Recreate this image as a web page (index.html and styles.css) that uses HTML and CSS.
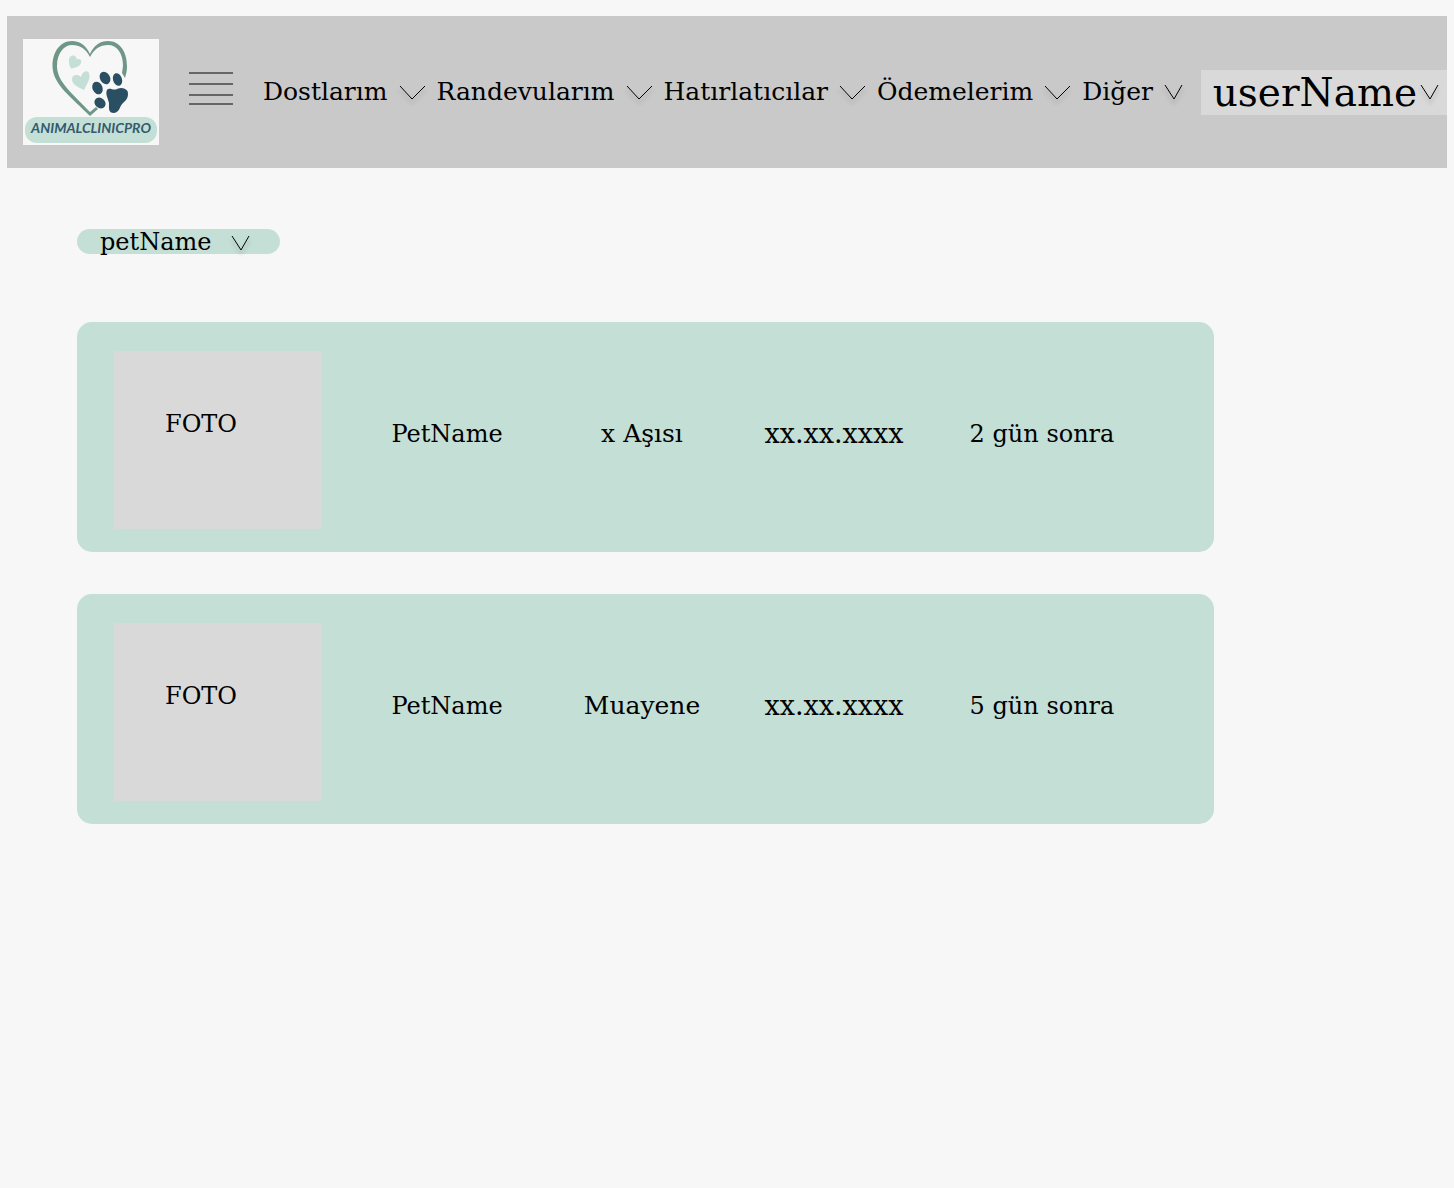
FILE: index.html
```html
<!DOCTYPE html>
<html lang="tr">
<head>
<meta charset="utf-8">
<meta name="viewport" content="width=device-width, initial-scale=1">
<title>AnimalClinicPro</title>
<link rel="stylesheet" href="styles.css">
</head>
<body>
<header class="topbar">
  <a class="logo" href="#" aria-label="AnimalClinicPro">
    <svg class="logo-art" viewBox="0 0 136 106">
      <path d="M67 15C62 5 56 2 49 2C37 2 29.500 13 29.500 27C29.500 45 48 58 67 77L75 70L73 68L67 73C50 55 34 43 34 27C34 14 41 6 49 6C57 6 63 10 67 18C71 10 77 6 85 6C94 6 100 14 100 27L99 34L102 39C104 33 104 29 104 27C104 13 97 2 85 2C77 2 71 6 67 15Z" fill="#6f9787"/>
      <path d="M48 29.500C45 24 45 18 49 16.500C52 16 53.500 18 54 20.500C57 19 59 21.500 58 24C57 27 53 29 48 29.500Z" fill="#c4dfd6"/>
      <path d="M61 51C54 48 49 45 49 40C49 36 54 34.500 58 38C59 33 64 30.500 66 34C68 39 64 45 61 51Z" fill="#c4dfd6"/>
      <g fill="#2a4f62">
        <ellipse cx="82" cy="39" rx="5" ry="6.500" transform="rotate(-30 82 39)"/>
        <ellipse cx="94.500" cy="40.500" rx="4.500" ry="6.500" transform="rotate(-17 94.500 40.500)"/>
        <ellipse cx="74.500" cy="49" rx="5" ry="6.500" transform="rotate(-25 74.500 49)"/>
        <ellipse cx="77" cy="64" rx="5" ry="6" transform="rotate(-50 77 64)"/>
        <path d="M84 51C87 48 90 52 94 50C98 48 102 49 104.500 52C106 57 104 61 100 64C96 68 97 73 91 74C85 74 86 69 86 64C85 59 82 55 84 51Z"/>
      </g>
      <rect x="2" y="78" width="132" height="26" rx="12" fill="#c4dfd6"/>
      <text class="logo-text" x="68" y="94" text-anchor="middle">ANIMALCLINICPRO</text>
    </svg>
  </a>
  <button class="menu" type="button" aria-label="Menü">
    <svg width="44" height="34" viewBox="0 0 44 34"><path d="M0 2H44M0 13H44M0 24H44M0 33H44" stroke="#666" stroke-width="2"/></svg>
  </button>
  <nav class="nav">
    <button class="nav-item" type="button">Dostlarım<svg class="chevron" width="25" height="15"><path d="M0 1L12 14L25 1"/></svg></button>
    <button class="nav-item" type="button">Randevularım<svg class="chevron" width="25" height="15"><path d="M0 1L12 14L25 1"/></svg></button>
    <button class="nav-item" type="button">Hatırlatıcılar<svg class="chevron" width="25" height="15"><path d="M0 1L12 14L25 1"/></svg></button>
    <button class="nav-item" type="button">Ödemelerim<svg class="chevron" width="25" height="15"><path d="M0 1L12 14L25 1"/></svg></button>
    <button class="nav-item" type="button">Diğer<svg class="chevron" width="18" height="16"><path d="M0 1L9 15L17 1"/></svg></button>
  </nav>
  <button class="user" type="button">userName<svg class="chevron" width="18" height="16"><path d="M0 1L9 15L17 1"/></svg></button>
</header>

<main class="content">
  <div class="pet-filter">
    <select class="pet-select" aria-label="petName">
      <option>petName</option>
    </select>
    <svg class="chevron pet-chevron" width="18" height="16"><path d="M0 1L9 15L17 1"/></svg>
  </div>

  <ul class="reminders">
    <li class="card">
      <div class="photo">FOTO</div>
      <span class="field">PetName</span>
      <span class="field procedure">x Aşısı</span>
      <time class="field date">xx.xx.xxxx</time>
      <span class="field">2 gün sonra</span>
    </li>
    <li class="card">
      <div class="photo">FOTO</div>
      <span class="field">PetName</span>
      <span class="field procedure">Muayene</span>
      <time class="field date">xx.xx.xxxx</time>
      <span class="field">5 gün sonra</span>
    </li>
  </ul>
</main>
</body>
</html>
```
FILE: styles.css
```css
* {
  box-sizing: border-box;
}

body {
  margin: 0;
  padding: 16px 7px;
  background: #f7f7f7;
  color: #000;
  font-family: "DejaVu Serif", serif;
  font-size: 24px;
  line-height: 30px;
}

button,
select {
  margin: 0;
  padding: 0;
  border: 0;
  background: none;
  color: inherit;
  font: inherit;
  cursor: pointer;
}

.topbar {
  display: flex;
  align-items: center;
  min-height: 152px;
  padding-left: 16px;
  background: #c9c9c9;
}

.logo {
  flex: none;
  width: 136px;
  height: 106px;
  background: #f7f7f7;
}

.logo-art {
  display: block;
  width: 100%;
  height: 100%;
}

.logo-text {
  fill: #345a6e;
  font-family: Lato, sans-serif;
  font-size: 14px;
  font-style: italic;
  font-weight: 700;
}

.menu {
  display: flex;
  flex: none;
  margin: 0 30px;
  padding-bottom: 8px;
}

.nav {
  display: flex;
  align-items: center;
  gap: 12px;
}

.nav-item {
  display: flex;
  align-items: center;
  gap: 12px;
  font-size: 25px;
  white-space: nowrap;
}

.chevron {
  flex: none;
  overflow: visible;
  fill: none;
  stroke: #000;
  stroke-width: 1;
  filter: drop-shadow(0 4px 2px rgba(0, 0, 0, 0.25));
}

.user {
  display: flex;
  align-items: center;
  gap: 4px;
  margin-left: auto;
  padding: 0 8px 0 12px;
  background: #d9d9d9;
  font-size: 39px;
  line-height: 45px;
}

.content {
  padding: 61px 70px;
}

.pet-filter {
  position: relative;
  display: flex;
  align-items: center;
  width: 203px;
  height: 25px;
  border-radius: 13px;
  background: #c4dfd6;
}

.pet-select {
  flex: 1;
  height: 32px;
  padding-left: 23px;
  appearance: none;
}

.pet-chevron {
  position: absolute;
  right: 30px;
  top: 6px;
  pointer-events: none;
}

.reminders {
  display: grid;
  gap: 42px;
  max-width: 1137px;
  margin: 68px 0 0;
  padding: 0;
  list-style: none;
}

.card {
  display: grid;
  grid-template-columns: 236px 194fr 196fr 188fr 228fr;
  align-items: center;
  padding: 29px 58px 23px 37px;
  border-radius: 15px;
  background: #c4dfd6;
}

.photo {
  width: 208px;
  height: 178px;
  padding: 58px 51px;
  background: #d9d9d9;
}

.field {
  padding-bottom: 12px;
  text-align: center;
}

.procedure {
  font-size: 25px;
}

.date {
  font-size: 27px;
}
```
